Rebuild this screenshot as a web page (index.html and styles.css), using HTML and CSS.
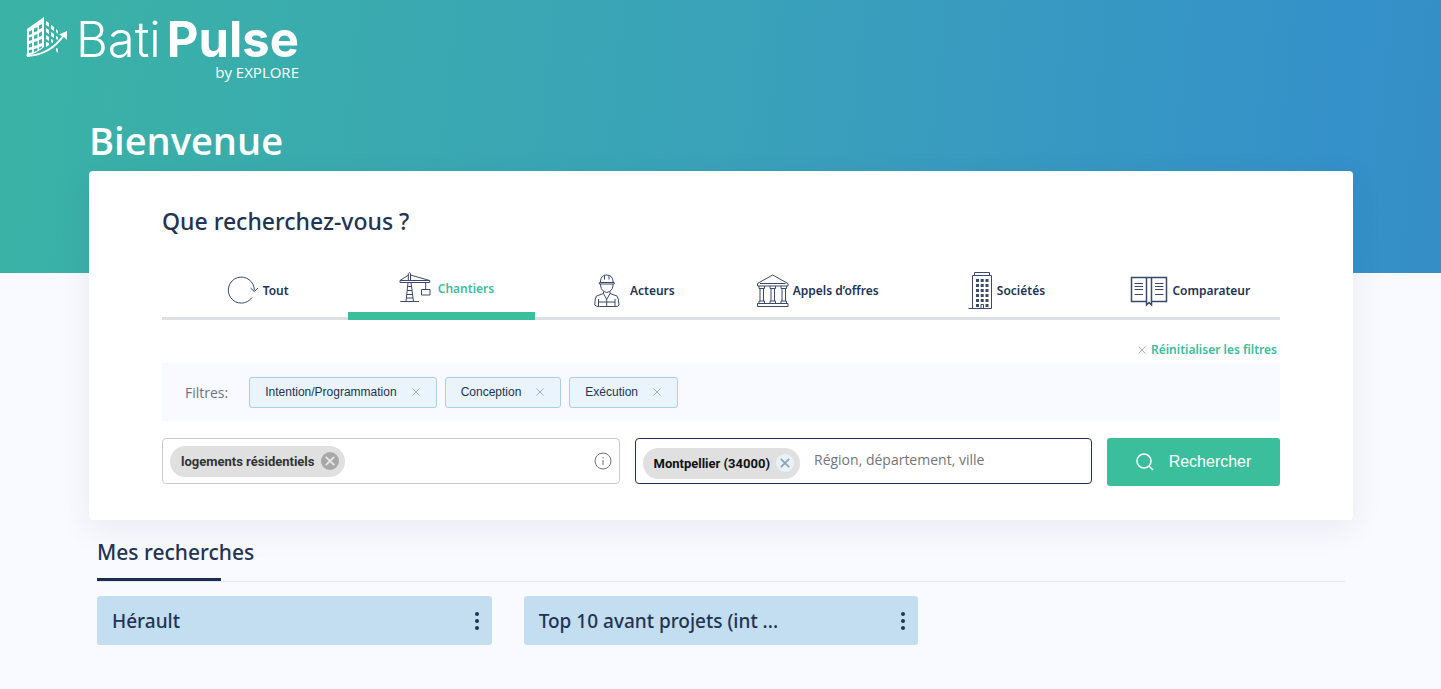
FILE: index.html
```
<!DOCTYPE html>
<html lang="fr">
<head>
<meta charset="utf-8">
<title>BatiPulse by EXPLORE</title>
<meta name="viewport" content="width=device-width, initial-scale=1">
<link rel="stylesheet" href="styles.css">
</head>
<body>
<svg width="0" height="0" class="sprite" aria-hidden="true">
  <symbol id="cross" viewBox="0 0 10 10"><path d="M1.5 1.5l7 7M8.500 1.500l-7 7" fill="none" stroke="currentColor"/></symbol>
  <symbol id="dots" viewBox="0 0 4 18"><circle cx="2" cy="2" r="2"/><circle cx="2" cy="9" r="2"/><circle cx="2" cy="16" r="2"/></symbol>
</svg>
<header class="hero">
  <a class="logo" href="#" aria-label="BatiPulse by EXPLORE">
    <svg class="logo-mark" viewBox="0 0 42 42" aria-hidden="true">
      <path fill="currentColor" fill-rule="evenodd" d="M1 13L18 1V31Q10 38 0 40L1 38ZM3 15.500V19L6 18V14ZM8 12.500V16.500L11.500 15V11ZM13 9.500V13.500L16 12V8ZM3 21.500V25L6 24V20.500ZM8 19.500V23L11.500 22V18ZM13 17V21L16 19.500V15.500ZM3 28V31.500L6 31V27ZM8 26V30L11.500 29V25ZM13 24V28L16 27V23ZM3 34V37L6 36.500V33.500ZM8 33V36L11.500 34.500V32ZM13 31.500V33.500L16 31.500V30Z"/>
      <path fill="currentColor" d="M20 5l3 2v4l-3-2zM25 9l3 2v4l-3-2zM30 13l2 2v3l-2-2zM20 12l3 2v4l-3-2zM25 16l3 2v4l-3-2zM30 20l2 1v3l-2-1zM20 19l3 2v4l-3-2zM25 23l2 1v3l-2-1zM20 26l3 1v2l-3 2zM30 32l2 1v4l-2-2zM25 31l2-1v2l-2 1z"/>
      <path d="M1 40Q24 39 38 19" fill="none" stroke="currentColor" stroke-width="2"/>
      <path fill="currentColor" d="M41 15V24L38.500 21.500L33 18.500Z"/>
    </svg>
    <span class="logo-text">
      <span class="logo-name">Bati<b>Pulse</b></span>
      <span class="logo-by">by EXPLORE</span>
    </span>
  </a>
  <h1>Bienvenue</h1>
</header>

<main>
  <section class="search-card">
    <h2>Que recherchez-vous ?</h2>
    <nav class="tabs">
      <a class="tab" href="#">
        <svg width="38" height="40" viewBox="0 0 38 40"><path d="M30 26.500A13 13 0 1 1 32.300 19.500M28.500 17L32.300 20.500L36 17"/></svg>Tout</a>
      <a class="tab active" href="#" aria-current="page">
        <svg width="46" height="40" viewBox="0 0 46 40"><path d="M19.300 12V5.500L20.300 4.500L21.500 5.500V12M19.500 7L11 12.500H40.700M21.500 7L40.700 12.500V14.500H11V12.500M19 14.500L17 33.500M22 14.500L24.500 33.500M11.300 33.500H30M18.500 18.500H22.500M18.200 22.500H23M18 26.500H23.500M17.500 30H24M36.700 14.500V21M32.500 21.500H41V27H32.500Z"/></svg>Chantiers</a>
      <a class="tab" href="#">
        <svg width="46" height="40" viewBox="0 0 46 40"><path d="M19.500 11.500V10Q20 4 25.700 4T32 10V11.500M18.300 11.500H33.200V13H18.300ZM23.500 4.500V8.500M28 4.500V8.500M19.700 13V15Q20 20 25.700 21.500Q31.500 20 32 15V13M22.500 20.500V22.500L15.500 25Q14 26.500 13.700 34Q16 36 18.500 35.500H33.500Q37 36 38 34Q37.500 26.500 36 25L29 22.500V20.500M22.500 22.500L25.700 28.500L29 22.500M25.700 28.500V35.500M17.500 28V35.500M34 28V35.500M17.500 31H25.700M34 31H25.700"/></svg>Acteurs</a>
      <a class="tab" href="#">
        <svg width="40" height="40" viewBox="0 0 40 40"><path d="M7.500 12.500L22.700 4L38 12.500V15H7.500ZM10 12.500H35.500M9 15V17.500H14.500V15M20 15V17.500H25.500V15M31 15V17.500H36.500V15M10 17.500V30M13.500 17.500V30M21 17.500V30M24.500 17.500V30M32 17.500V30M35.500 17.500V30M9 32.500V30H14.500V32.500M20 32.500V30H25.500V32.500M31 32.500V30H36.500V32.500M7.500 32.500H38V35.500H7.500Z"/></svg>Appels d’offres</a>
      <a class="tab" href="#">
        <svg width="38" height="40" viewBox="0 0 38 40"><path d="M18.500 4.500V1.500H33.500V4.500M16.500 37.500V4.500H35.500V37.500M12.500 37.500H35.500M25 37V33.500H27.500V37"/><path class="windows" d="M21.500 8V36M26.200 8V32M31 8V36"/></svg>Sociétés</a>
      <a class="tab" href="#">
        <svg width="46" height="40" viewBox="0 0 46 40"><path class="bold" d="M23.500 30.500H8.500V6.500H43.500V30.500H28.500M23.500 6.500V34L26 31.500L28.500 34V6.500"/><path d="M11.500 12.500H20M11.500 15.500H20M11.500 18.500H20M11.500 23.500H20M32 12.500H40.500M32 15.500H40.500M32 18.500H40.500M32 23.500H40.500"/></svg>Comparateur</a>
    </nav>

    <div class="reset-row"><button class="reset" type="button"><svg><use href="#cross"/></svg>Réinitialiser les filtres</button></div>

    <div class="filters">
      <span class="filters-label">Filtres:</span>
      <button class="filter" type="button">Intention/Programmation<svg><use href="#cross"/></svg></button>
      <button class="filter" type="button">Conception<svg><use href="#cross"/></svg></button>
      <button class="filter" type="button">Exécution<svg><use href="#cross"/></svg></button>
    </div>

    <form class="search-form">
      <div class="field">
        <span class="tag">logements résidentiels<button type="button" aria-label="Retirer logements résidentiels"><svg><use href="#cross"/></svg></button></span>
        <input type="text" aria-label="Mots-clés">
        <svg class="info" viewBox="0 0 18 18"><circle cx="9" cy="9" r="8"/><path d="M9 8V13M9 5V6.500"/></svg>
      </div>
      <div class="field focused">
        <span class="tag place">Montpellier (34000)<button type="button" aria-label="Retirer Montpellier"><svg><use href="#cross"/></svg></button></span>
        <input type="text" aria-label="Localisation" placeholder="Région, département, ville">
      </div>
      <button class="submit" type="submit"><svg viewBox="0 0 18 18"><circle cx="8" cy="8" r="7"/><path d="M13 13L17 17"/></svg>Rechercher</button>
    </form>
  </section>

  <section class="saved">
    <h2><span>Mes recherches</span></h2>
    <div class="saved-grid">
      <article class="saved-item"><h3>Hérault</h3><button type="button" aria-label="Options Hérault"><svg><use href="#dots"/></svg></button></article>
      <article class="saved-item"><h3>Top 10 avant projets (int ...</h3><button type="button" aria-label="Options Top 10"><svg><use href="#dots"/></svg></button></article>
    </div>
  </section>
</main>
</body>
</html>
```
FILE: styles.css
```
* { box-sizing: border-box; }
body {
  margin: 0;
  background: #f9faff;
  color: #223354;
  font-family: "Open Sans", "Noto Sans", sans-serif;
}
h1, h2, h3 { margin: 0; }
h2, h3 { font-family: "Noto Sans", "Open Sans", sans-serif; font-weight: 500; }
button { border: 0; background: none; padding: 0; font: inherit; color: inherit; cursor: pointer; }
a { color: inherit; text-decoration: none; }
.sprite { position: absolute; }

.hero {
  padding: 16px 24px 104px;
  color: #fff;
  background: linear-gradient(96deg, #3ab3a5 0%, #3aa2b9 50%, #3591c9 92%, #358fc6 100%);
}
.logo { display: inline-flex; gap: 8px; }
.logo-mark { width: 42px; height: 42px; margin-left: 2px; }
.logo-text { display: flex; flex-direction: column; align-items: flex-end; }
.logo-name { font: 300 49px/48px Inter, sans-serif; }
.logo-name b { margin-left: 6px; font-weight: 700; }
.logo-by { font-size: 15px; line-height: 17px; font-weight: 400; }
.hero h1 { margin: 31px 65px 0; font-size: 38px; line-height: 57px; font-weight: 600; }

main { padding: 0 88px 43px 89px; }
.search-card {
  margin-top: -102px;
  padding: 32px 73px 34px;
  border-radius: 4px;
  background: #fff;
  box-shadow: 0 8px 32px rgba(34, 51, 84, .08);
}
.search-card h2 { font-size: 23px; line-height: 36px; }

.tabs { display: flex; margin-top: 25px; height: 56px; }
.tab {
  flex: 1 1 0;
  display: flex;
  align-items: center;
  justify-content: center;
  gap: 3px;
  border-bottom: 3px solid #dee0e6;
  font: 600 12px "Noto Sans", "Open Sans", sans-serif;
  white-space: nowrap;
}
.tab.active { border-bottom: 8px solid #3abe9c; color: #3abe9c; }
.tab svg { flex: none; fill: none; stroke: #3b4a6b; stroke-width: 1; }
.tab .bold { stroke-width: 1.5; }
.tab .windows { stroke-width: 3; stroke-dasharray: 3 2; }

.reset-row { display: flex; justify-content: flex-end; padding: 20px 3px 3px; }
.reset { display: flex; align-items: center; gap: 4px; font: 600 12px/20px "Noto Sans", "Open Sans", sans-serif; color: #3abe9c; }
.reset svg { width: 10px; height: 10px; color: #aab; }

.filters { display: flex; align-items: center; gap: 8px; padding: 13px 23px; min-height: 58px; background: #f9faff; }
.filters-label { margin-right: 13px; font-size: 14px; color: #6c7484; }
.filter {
  display: flex;
  align-items: center;
  gap: 14px;
  height: 31px;
  padding: 0 15px;
  border: 1px solid #a9d0ea;
  border-radius: 3px;
  background: #e9f4fc;
  font: 12px "Liberation Sans", Arial, sans-serif;
}
.filter svg { width: 10px; height: 10px; color: #a5afb8; }

.search-form { display: flex; align-items: flex-start; gap: 15px; margin-top: 17px; }
.field {
  flex: 1 1 0;
  min-width: 0;
  display: flex;
  align-items: center;
  height: 46px;
  padding: 0 7px;
  border: 1px solid #c9cbcf;
  border-radius: 4px;
  background: #fff;
}
.field.focused { border-color: #223354; }
.field input {
  flex: 1;
  min-width: 0;
  padding: 0 14px 3px;
  border: 0;
  outline: 0;
  background: none;
  font: 14px "Open Sans", "Noto Sans", sans-serif;
}
.field input::placeholder { color: #757575; opacity: 1; }
.tag {
  display: flex;
  align-items: center;
  gap: 6px;
  height: 31px;
  padding: 0 6px 0 11px;
  border-radius: 16px;
  background: #e0e0e0;
  color: #333;
  font: 700 13px Roboto, sans-serif;
  white-space: nowrap;
}
.tag button { display: flex; align-items: center; justify-content: center; width: 18px; height: 18px; border-radius: 50%; background: #a8a8a8; color: #e8e8e8; }
.tag button svg { width: 12px; height: 12px; stroke-width: 1.5; }
.tag.place { margin-top: 4px; color: #111; }
.tag.place button { background: #e6f3fb; color: #96a3ad; }
.info { width: 18px; height: 18px; fill: none; stroke: #6d7480; }
.submit {
  display: flex;
  align-items: center;
  justify-content: center;
  gap: 15px;
  width: 173px;
  height: 48px;
  border-radius: 3px;
  background: #3abe9c;
  color: #fff;
  font: 16px "Liberation Sans", Arial, sans-serif;
}
.submit svg { width: 18px; height: 18px; fill: none; stroke: currentColor; stroke-width: 1.5; }

.saved { padding: 14px 8px 0; }
.saved h2 { border-bottom: 1px solid #e4e7ee; font-size: 21px; line-height: 36px; }
.saved h2::after { content: ""; display: block; width: 124px; height: 3px; margin-top: 8px; background: #1d2d50; }
.saved-grid { display: grid; grid-template-columns: repeat(3, 1fr); gap: 32px; margin-top: 14px; }
.saved-item {
  display: flex;
  align-items: center;
  justify-content: space-between;
  height: 49px;
  padding: 0 13px 0 15px;
  border-radius: 3px;
  background: #c3ddf1;
}
.saved-item h3 { font-size: 19px; line-height: 28px; }
.saved-item button { display: flex; }
.saved-item svg { width: 4px; height: 18px; fill: #223354; }
```
